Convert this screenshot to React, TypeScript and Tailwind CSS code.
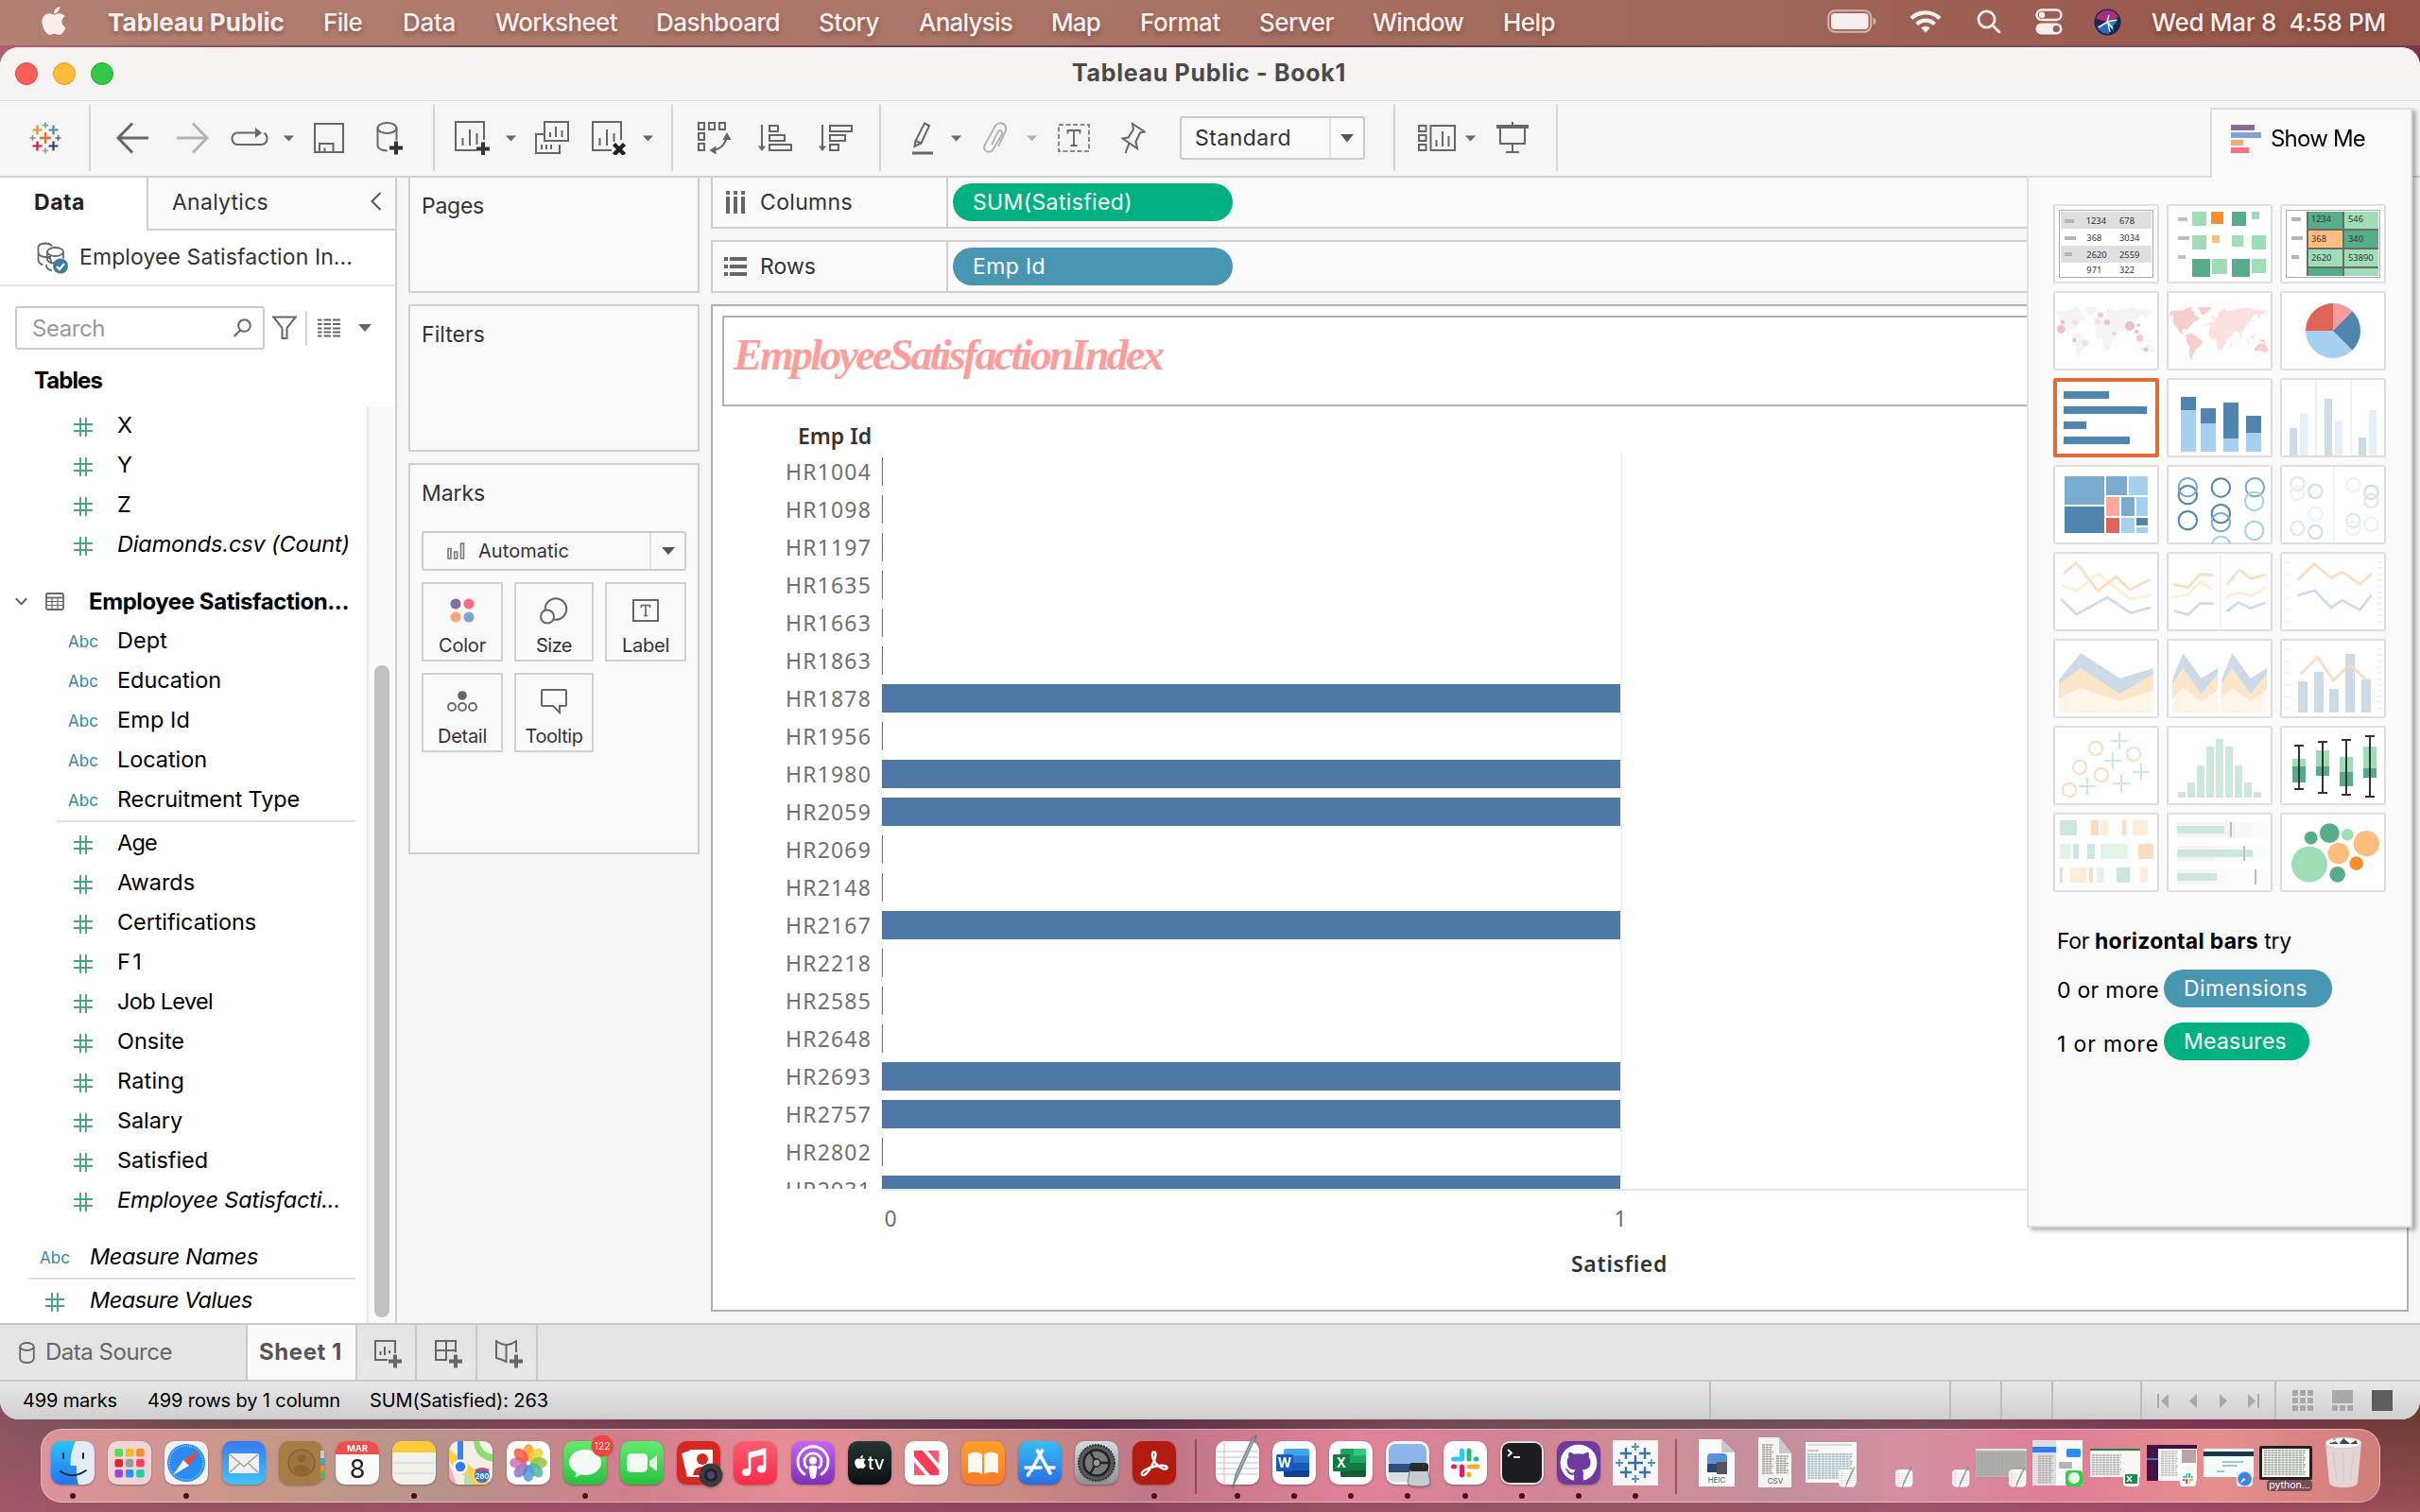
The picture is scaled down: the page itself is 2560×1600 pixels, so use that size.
import { useLayoutEffect, useRef, useState } from "react";
import type { ReactNode } from "react";
import { FaApple, FaGithub } from "react-icons/fa";

/* Text whose letter spacing is adjusted so that the line takes a given width. */
function T({ w, className = "", children }: { w: number; className?: string; children: string }) {
  const ref = useRef<HTMLSpanElement>(null);
  const [ls, setLs] = useState(0);
  useLayoutEffect(() => {
    const el = ref.current;
    if (el) setLs((w - el.getBoundingClientRect().width) / children.length);
  }, [w, children]);
  return (
    <span ref={ref} style={{ letterSpacing: ls }} className={"inline-block shrink-0 self-auto whitespace-pre " + className}>
      {children}
    </span>
  );
}

/* ---------- menu bar ---------- */
const menus: [string, number, string][] = [
  ["File", 41, "ml-[41px]"],
  ["Data", 56, "ml-[43px]"],
  ["Worksheet", 129, "ml-[42px]"],
  ["Dashboard", 131, "ml-[41px]"],
  ["Story", 64, "ml-[41px]"],
  ["Analysis", 99, "ml-[42px]"],
  ["Map", 52, "ml-[41px]"],
  ["Format", 85, "ml-[42px]"],
  ["Server", 79, "ml-[41px]"],
  ["Window", 96, "ml-[41px]"],
  ["Help", 55, "ml-[42px]"],
];

function MenuBar() {
  return (
    <header className="flex h-12 items-center bg-linear-to-r from-[#b28072] via-[#a87265] to-[#945548] pb-[2px] font-['Inter'] text-[26px] font-medium text-[#f8eeeb] [text-shadow:0_3px_5px_rgba(60,20,10,0.35)]">
      <FaApple className="ml-10 h-[34px] w-[34px] -translate-y-px" />
      <T w={187} className="ml-10 font-bold">Tableau Public</T>
      {menus.map(([m, w, c]) => (
        <T key={m} w={w} className={c}>{m}</T>
      ))}
      <div className="ml-auto mr-[36px] flex items-center">
        <svg width="52" height="26" viewBox="0 0 52 26" fill="none">
          <rect x="1.2" y="1.2" width="45" height="22.6" rx="7" stroke="#d5b6ae" strokeWidth="2" />
          <rect x="4" y="4" width="39.5" height="17" rx="4" fill="#f5eeec" />
          <path d="M48.5 8.5q3 1.5 3 4t-3 4z" fill="#d5b6ae" />
        </svg>
        <svg className="ml-[35px]" width="34" height="26" viewBox="0 0 34 26" fill="none" stroke="#f5eeec" strokeWidth="4.4">
          <path d="M2 9.5a21.5 21.5 0 0 1 30 0" />
          <path d="M7.6 15.5a13.4 13.4 0 0 1 18.8 0" />
          <path d="M17 24.5l-4.8-4.9a7 7 0 0 1 9.6 0z" fill="#f5eeec" stroke="none" />
        </svg>
        <svg className="ml-[37px]" width="26" height="26" viewBox="0 0 26 26" fill="none" stroke="#f5eeec" strokeWidth="2.8" strokeLinecap="round">
          <circle cx="10.5" cy="10.5" r="8.6" />
          <path d="M17 17l7 7" />
        </svg>
        <svg className="ml-9" width="30" height="28" viewBox="0 0 30 28" fill="none">
          <rect x="1.5" y="1.5" width="26" height="10.5" rx="5.2" stroke="#f5eeec" strokeWidth="2.4" />
          <circle cx="7" cy="6.7" r="3.2" fill="#f5eeec" />
          <rect x="0.5" y="15.5" width="28" height="12" rx="6" fill="#f5eeec" />
          <circle cx="22.3" cy="21.5" r="3.6" fill="#9a5d50" />
        </svg>
        <svg className="ml-[32px]" width="29" height="29" viewBox="0 0 29 29">
          <circle cx="14.5" cy="14.5" r="14" fill="#232152" />
          <path d="M2 11A13 13 0 0 1 26 9L14 14z" fill="#a8307c" />
          <path d="M3 19l11-5 2 13a13 13 0 0 1-13-8z" fill="#1f6fc0" />
          <path d="M13 14l13-3-6 8 1 6z" fill="#1f8f9e" />
          <path d="M5 20l9.500-6 2.500 11M14 14l10-2M14 14l6 7M14 14l2-7" stroke="#eaf6ff" strokeWidth="1.500" fill="none" />
        </svg>
        <T w={248} className="ml-8">Wed Mar 8  4:58 PM</T>
      </div>
    </header>
  );
}

/* ---------- toolbar ---------- */
function Caret({ c, light }: { c: string; light?: boolean }) {
  return (
    <svg className={"shrink-0 " + c} width="11" height="7" viewBox="0 0 11 7">
      <path d="M0 .5h11L5.5 6.5z" fill={light ? "#b4b4b4" : "#666"} />
    </svg>
  );
}

function Ico({ c = "", w, h, children, s = "#666", sw = 2 }: { c?: string; w: number; h: number; children: ReactNode; s?: string; sw?: number }) {
  return (
    <svg className={"shrink-0 " + c} width={w} height={h} viewBox={`0 0 ${w} ${h}`} fill="none" stroke={s} strokeWidth={sw}>
      {children}
    </svg>
  );
}

const plus = (x: number, y: number, r: number) => `M${x - r} ${y}h${2 * r}M${x} ${y - r}v${2 * r}`;

function Toolbar() {
  return (
    <div className="flex h-[80px] items-stretch border-t border-[#dedede] bg-[#f5f5f5] pb-[5px] pt-[4px]">
      <div className="flex w-24 items-center border-r-2 border-[#d4d4d4]">
        <Ico c="ml-[31px]" w={34} h={34}>
          <path d={plus(17, 17, 6)} stroke="#eb6e2d" strokeWidth={2.4} />
          <path d={plus(8.5, 8.5, 5)} stroke="#eb9129" strokeWidth={2.2} />
          <path d={plus(25.5, 8.5, 5)} stroke="#5b879b" strokeWidth={2.2} />
          <path d={plus(8.5, 25.5, 5)} stroke="#c72035" strokeWidth={2.2} />
          <path d={plus(25.5, 25.5, 5)} stroke="#1f447e" strokeWidth={2.2} />
          <path d={plus(17, 3.5, 3)} stroke="#7099a6" strokeWidth={1.6} />
          <path d={plus(3.5, 17, 3)} stroke="#7099a6" strokeWidth={1.6} />
          <path d={plus(30.5, 17, 3)} stroke="#5c6692" strokeWidth={1.6} />
          <path d={plus(17, 30.5, 3)} stroke="#8b93b8" strokeWidth={1.6} />
        </Ico>
      </div>
      <div className="flex w-[364px] items-center border-r-2 border-[#d4d4d4]">
        <Ico c="ml-[27px]" w={34} h={34} sw={3}><path d="M34 17H2M17 1.5L2 17l15 15.5" /></Ico>
        <Ico c="ml-[30px]" w={34} h={34} sw={3} s="#b4b4b4"><path d="M0 17h32M17 1.5L32 17 17 32.5" /></Ico>
        <Ico c="ml-[23px]" w={40} h={34}>
          <path d="M30 11.5H8a6 6 0 0 0-6.5 6.5A6 6 0 0 0 8 24h24a6 6 0 0 0 6.500-6.500q0-4-3-5.500" />
          <path d="M26 6l7 5.500-7 5.500z" fill="#666" stroke="none" />
        </Ico>
        <Caret c="ml-[16px]" />
        <Ico c="ml-[21px]" w={32} h={34}><path d="M1 2h30v30H1zM6 32V23h14.500v9M11.500 32v-4.500" /></Ico>
        <Ico c="ml-[34px]" w={30} h={36}>
          <ellipse cx="11.500" cy="7.500" rx="10" ry="5.500" />
          <path d="M1.500 7.500v19q1 4.500 10 5M21.500 7.500v13" />
          <path d="M14 28.500h14M21 21.500v14" stroke="#333" strokeWidth={4} />
        </Ico>
      </div>
      <div className="flex w-[252px] items-center border-r-2 border-[#d4d4d4]">
        <Ico c="ml-[21px]" w={38} h={36}>
          <path d="M31 20V1H1v30h22M8.500 26v-8M16 26V9M23.500 13v12" />
          <path d="M23 29.500h14M30 22.500v14" stroke="#333" strokeWidth={4} />
        </Ico>
        <Caret c="ml-[16px]" />
        <Ico c="ml-[20px]" w={36} h={36}>
          <path d="M10 1h25v20H10zM16 17v-5M22 17V6M28.500 17v-7M10 14H1v20h25v-9M7 30v-5M12 30v-5M17 30v-5" />
        </Ico>
        <Ico c="ml-[24px]" w={38} h={36}>
          <path d="M31 20V1H1v30h20M8.500 26v-8M16 26V9M23.500 22v-9" />
          <path d="M23.500 24.500l11 11M34.500 24.500l-11 11" stroke="#222" strokeWidth={4.4} />
        </Ico>
        <Caret c="ml-[16px]" />
      </div>
      <div className="flex w-[220px] items-center border-r-2 border-[#d4d4d4]">
        <Ico c="ml-[26px]" w={36} h={36}>
          <path d="M1 2h6v7H1zM12 2h6v7h-6zM23 2h6v7h-6zM1 13h6v7H1zM1 24h6v7H1zM17 31q12-3 13.500-14" />
          <path d="M12.500 31l7-4.500v9zM31 12l-4.500 8h9z" fill="#666" stroke="none" />
        </Ico>
        <Ico c="ml-[28px]" w={36} h={32}>
          <path d="M4 2v24M12 3h9v6h-9zM12 13h16v6H12zM12 23h23v6H12z" />
          <path d="M0 24.500h8l-4 5.500z" fill="#666" stroke="none" />
        </Ico>
        <Ico c="ml-[28px]" w={36} h={32}>
          <path d="M4 2v24M12 3h23v6H12zM12 13h16v6H12zM12 23h9v6h-9z" />
          <path d="M0 24.500h8l-4 5.500z" fill="#666" stroke="none" />
        </Ico>
      </div>
      <div className="flex w-[544px] items-center border-r-2 border-[#d4d4d4]">
        <Ico c="ml-[33px]" w={22} h={36}>
          <path d="M13 2.500l5 2.500-8.500 18.500-6-2.500zM3.500 21l-1 6 6.500-3.500" />
          <path d="M0 34h22" strokeWidth={3.2} />
        </Ico>
        <Caret c="ml-[19px]" />
        <Ico c="ml-[23px]" w={26} h={34} s="#b4b4b4">
          <path d="M9 24l7-14q2-2 3.500 0t0 4L10 30q-3 3-6.500 1T1.500 25L13 4q4-4 8-2t3 7l-8 17" />
        </Ico>
        <Caret c="ml-[20px]" light />
        <Ico c="ml-[22px]" w={34} h={30}>
          <rect x="1" y="1" width="32" height="28" strokeDasharray="5 2.500" stroke="#8a8a8a" />
          <path d="M10.500 10.500V7h13v3.500M17 7v16M13.500 23h7" strokeWidth={1.800} />
        </Ico>
        <Ico c="ml-[33px]" w={26} h={34}>
          <path d="M12 2l13 8.500-5 1-4.500 9.500 1.500 7L1.500 17.500l6-1L13 8zM8.500 22.500L4.500 33" />
        </Ico>
        <div className="ml-[36px] flex h-[46px] w-[196px] shrink-0 items-center rounded-[3px] border-2 border-[#cbcbcb] bg-[#fafafa]">
          <T w={102} className="ml-[14px] text-[23px] text-[#333]">Standard</T>
          <span className="ml-auto flex h-full w-[36px] items-center justify-center border-l-2 border-[#e3e3e3]">
            <svg width="14" height="9" viewBox="0 0 14 9"><path d="M0 0h14L7 8.500z" fill="#555" /></svg>
          </span>
        </div>
      </div>
      <div className="flex w-[172px] items-center border-r-2 border-[#d4d4d4]">
        <Ico c="ml-[24px]" w={40} h={30}>
          <path d="M1 2h7.500v6H1zM1 12h7.500v6H1zM1 22h7.500v6H1zM13.500 2H39v26H13.500zM19.500 24v-7M26 24V8M32.500 24V13" />
        </Ico>
        <Caret c="ml-[10px]" />
        <Ico c="ml-[22px]" w={34} h={34}>
          <path d="M4 7v16h26V7M17 0v3M17 23v9M10 32h14" />
          <path d="M0 5h34" strokeWidth={4} />
        </Ico>
      </div>
    </div>
  );
}

/* ---------- data pane ---------- */
function Hash() {
  return (
    <svg width="20" height="20" viewBox="0 0 20 20" stroke="#46a57c" strokeWidth="1.900" fill="none">
      <path d="M0 7h20M0 14h20M7 0v20M13 0v20" />
    </svg>
  );
}

type FieldDef = { name: string; w: number; abc?: boolean; it?: boolean; top?: boolean };

function Field({ name, w, abc, it, top }: FieldDef) {
  return (
    <div className={"flex h-[42px] items-center " + (top ? "pl-[38px]" : "pl-[68px]")}>
      <span className="mt-[5px] flex w-10 justify-center">
        {abc ? <T w={32} className="font-['Inter'] text-[17px] text-[#3d82a3]">Abc</T> : <Hash />}
      </span>
      <T w={w} className={"mt-px text-[23.500px] text-black " + (top ? "ml-[17px] " : "ml-[16px] ") + (it ? "italic" : "")}>{name}</T>
    </div>
  );
}

const diamonds: FieldDef[] = [
  { name: "X", w: 15 },
  { name: "Y", w: 14 },
  { name: "Z", w: 14 },
  { name: "Diamonds.csv (Count)", w: 246, it: true },
];
const dims: FieldDef[] = [
  { name: "Dept", w: 53, abc: true },
  { name: "Education", w: 110, abc: true },
  { name: "Emp Id", w: 77, abc: true },
  { name: "Location", w: 95, abc: true },
  { name: "Recruitment Type", w: 193, abc: true },
];
const measures: FieldDef[] = [
  { name: "Age", w: 42 },
  { name: "Awards", w: 82 },
  { name: "Certifications", w: 147 },
  { name: "F1", w: 28 },
  { name: "Job Level", w: 101 },
  { name: "Onsite", w: 71 },
  { name: "Rating", w: 71 },
  { name: "Salary", w: 69 },
  { name: "Satisfied", w: 96 },
  { name: "Employee Satisfacti...", w: 236, it: true },
];

function DataPane() {
  return (
    <aside className="flex w-[420px] shrink-0 flex-col border-r-2 border-[#d0d0d0] bg-white">
      <div className="flex h-14 shrink-0">
        <div className="w-[155px] pl-[36px] pt-[9px]">
          <T w={54} className="text-[23px] font-bold text-[#222]">Data</T>
        </div>
        <div className="flex flex-1 border-b-2 border-l-2 border-[#d0d0d0] bg-[#fafafa] pt-[9px]">
          <T w={102} className="ml-[25px] text-[23px] text-[#333]">Analytics</T>
          <svg className="ml-auto mr-[14px] mt-[6px]" width="12" height="20" viewBox="0 0 12 20" fill="none" stroke="#555" strokeWidth="2">
            <path d="M10.500 1L1.500 10l9 9" />
          </svg>
        </div>
      </div>
      <div className="flex h-[59px] shrink-0 items-center border-b-2 border-[#e6e6e6]">
        <svg className="ml-[39px]" width="34" height="34" viewBox="0 0 34 34" fill="none" stroke="#666" strokeWidth="1.800">
          <path d="M16 4.500Q14 1.500 9 1.500 1.500 2 1.500 5.500v14q1 4 5 4.500M2 12q1 4 8 4l5 0M15 21q0-5-5-5M10 24q0 6 6 6" />
          <ellipse cx="19.500" cy="10.500" rx="8.500" ry="4.500" />
          <path d="M11 10.500v8q1 4 8 4M28 10.500v7" />
          <circle cx="25" cy="25.500" r="8" fill="#3a7d9f" stroke="none" />
          <path d="M21 26l3 3 5-6" stroke="#fff" strokeWidth="2.200" />
        </svg>
        <T w={289} className="ml-[11px] text-[23px] text-[#333]">Employee Satisfaction In...</T>
      </div>
      <div className="mt-[21px] flex h-[46px] shrink-0 items-center">
        <div className="ml-4 flex h-[46px] w-[264px] items-center rounded-[3px] border-2 border-[#cbcbcb]">
          <T w={77} className="ml-[16px] mt-px text-[24px] text-[#999]">Search</T>
          <svg className="ml-auto mr-[12px]" width="19" height="20" viewBox="0 0 19 20" fill="none" stroke="#666" strokeWidth="2">
            <circle cx="11.500" cy="7.500" r="6.300" /><path d="M7 12.500L.8 19" />
          </svg>
        </div>
        <svg className="ml-2" width="26" height="26" viewBox="0 0 26 26" fill="none" stroke="#666" strokeWidth="2">
          <path d="M1.200 1.500h23.600L15.500 13v11h-5V13z" />
        </svg>
        <div className="ml-[9px] h-9 w-[2px] bg-[#d4d4d4]" />
        <svg className="ml-[11px]" width="24" height="20" viewBox="0 0 24 20" stroke="#666" strokeWidth="2">
          <path d="M0 1.500h4.500M6.500 1.500h7.500M16 1.500h8M0 6h4.500M6.500 6h7.500M16 6h8M0 10.500h4.500M6.500 10.500h7.500M16 10.500h8M0 14.500h4.500M6.500 14.500h7.500M16 14.500h8M0 18.500h4.500M6.500 18.500h7.500M16 18.500h8" />
        </svg>
        <svg className="ml-[19px]" width="14" height="8" viewBox="0 0 14 8"><path d="M0 0h14L7 8z" fill="#666" /></svg>
      </div>
      <div className="flex h-[58px] shrink-0 items-center pt-[8px]">
        <T w={72} className="ml-[36px] text-[24px] font-bold text-black">Tables</T>
      </div>
      <div className="flex min-h-0 flex-1">
        <div className="w-[388px]">
          {diamonds.map((f) => <Field key={f.name} {...f} />)}
          <div className="mt-5 flex h-10 items-center">
            <svg className="ml-4" width="13" height="9" viewBox="0 0 13 9" fill="none" stroke="#666" strokeWidth="2"><path d="M.8 1.200l5.700 6 5.700-6" /></svg>
            <svg className="ml-[19px]" width="20" height="19" viewBox="0 0 20 19" fill="none" stroke="#666" strokeWidth="1.800">
              <rect x="1" y="1" width="18" height="17" rx="1.500" />
              <path d="M1 5.500h18" /><path d="M1 9.500h18M1 13.500h18M7 5.500V18M13 5.500V18" strokeWidth="1.200" />
            </svg>
            <T w={275} className="ml-[26px] mt-[2px] text-[24px] font-bold text-black">Employee Satisfaction...</T>
          </div>
          {dims.map((f) => <Field key={f.name} {...f} />)}
          <div className="ml-[60px] mt-[2px] h-[2px] w-[316px] bg-[#dedede]" />
          {measures.map((f) => <Field key={f.name} {...f} />)}
          <div className="h-[18px]" />
          <Field name="Measure Names" w={178} abc it top />
          <div className="ml-[30px] mt-[2px] h-[2px] w-[346px] bg-[#dedede]" />
          <Field name="Measure Values" w={172} it top />
        </div>
        <div className="mt-[2px] flex w-[30px] justify-center border-l-2 border-[#e8e8e8] bg-[#f9f9f9]">
          <div className="mt-[274px] h-[690px] w-4 rounded-full bg-[#c1c1c1]" />
        </div>
      </div>
    </aside>
  );
}

/* ---------- cards ---------- */
function MarkButton({ label, w, children }: { label: string; w: number; children: ReactNode }) {
  return (
    <div className="flex h-[84px] flex-col items-center justify-between border-2 border-[#d0d0d0] pt-3">
      <div className="flex h-8 items-center justify-center">{children}</div>
      <T w={w} className="text-[20px] leading-[30px] text-[#333]">{label}</T>
    </div>
  );
}

function Cards() {
  const box = "w-[308px] border-2 border-[#d0d0d0] bg-[#fafafa]";
  return (
    <div className="ml-3 flex w-[308px] shrink-0 flex-col">
      <div className={box + " h-[122px] border-t-0 pl-3 pt-[14px]"}>
        <T w={66} className="text-[23px] leading-[32px] text-[#333]">Pages</T>
      </div>
      <div className={box + " mt-3 h-[156px] pl-3 pt-[14px]"}>
        <T w={67} className="text-[23px] leading-[32px] text-[#333]">Filters</T>
      </div>
      <div className={box + " mt-3 h-[414px] px-3 pt-[14px]"}>
        <T w={67} className="text-[23px] leading-[32px] text-[#333]">Marks</T>
        <div className="mt-6 flex h-[42px] items-center rounded-[3px] border-2 border-[#cbcbcb]">
          <svg className="ml-[25px]" width="19" height="18" viewBox="0 0 19 18" fill="none" stroke="#777" strokeWidth="1.600">
            <path d="M1 6.500h3v10.500H1zM7.700 10h3v7h-3zM14.500 1h3v16h-3z" />
          </svg>
          <T w={96} className="ml-[14px] text-[20px] text-[#333]">Automatic</T>
          <span className="ml-auto flex h-full w-[37px] items-center justify-center border-l-2 border-[#e3e3e3]">
            <svg width="14" height="8" viewBox="0 0 14 8"><path d="M0 0h14L7 8z" fill="#555" /></svg>
          </span>
        </div>
        <div className="mt-3 grid grid-cols-[86px_84px_86px] gap-3">
          <MarkButton label="Color" w={50}>
            <svg width="26" height="26" viewBox="0 0 26 26">
              <circle cx="6" cy="6" r="5.600" fill="#84709a" /><circle cx="20" cy="6" r="5.600" fill="#fa7080" />
              <circle cx="6" cy="20" r="5.600" fill="#f4a67c" /><circle cx="20" cy="20" r="5.600" fill="#80a4cb" />
            </svg>
          </MarkButton>
          <MarkButton label="Size" w={38}>
            <svg width="30" height="29" viewBox="0 0 30 29" fill="none" stroke="#666" strokeWidth="2">
              <circle cx="17" cy="12.500" r="11.300" /><circle cx="8" cy="20.500" r="7" fill="#fafafa" />
            </svg>
          </MarkButton>
          <MarkButton label="Label" w={50}>
            <svg width="28" height="24" viewBox="0 0 28 24" fill="none" stroke="#666" strokeWidth="2">
              <rect x="1" y="1" width="26" height="22" /><path d="M9.500 9V6.500h9V9M14 6.500v11M12 17.500h4" strokeWidth="1.600" />
            </svg>
          </MarkButton>
          <MarkButton label="Detail" w={52}>
            <svg width="32" height="24" viewBox="0 0 32 24" fill="none" stroke="#666" strokeWidth="1.800">
              <circle cx="16" cy="6" r="4.800" fill="#666" stroke="none" />
              <circle cx="5" cy="18" r="4" /><circle cx="16" cy="18" r="4" /><circle cx="27" cy="18" r="4" />
            </svg>
          </MarkButton>
          <MarkButton label="Tooltip" w={61}>
            <svg width="28" height="27" viewBox="0 0 28 27" fill="none" stroke="#666" strokeWidth="2">
              <path d="M2 1h24q1 0 1 1v15q0 1-1 1h-6v7l-7-7H2q-1 0-1-1V2q0-1 1-1z" />
            </svg>
          </MarkButton>
        </div>
      </div>
    </div>
  );
}

/* ---------- worksheet ---------- */
const rows: [string, number][] = [
  ["HR1004", 0], ["HR1098", 0], ["HR1197", 0], ["HR1635", 0], ["HR1663", 0], ["HR1863", 0], ["HR1878", 1],
  ["HR1956", 0], ["HR1980", 1], ["HR2059", 1], ["HR2069", 0], ["HR2148", 0], ["HR2167", 1], ["HR2218", 0],
  ["HR2585", 0], ["HR2648", 0], ["HR2693", 1], ["HR2757", 1], ["HR2802", 0], ["HR2931", 1],
];

function Shelves() {
  return (
    <>
      <div className="flex h-[54px] shrink-0 items-center border-2 border-t-0 border-[#d0d0d0] bg-[#fafafa]">
        <div className="flex h-full w-[249px] items-center border-r-2 border-[#d0d0d0]">
          <svg className="ml-[14px]" width="20" height="24" viewBox="0 0 20 24" fill="#666">
            <path d="M0 0h4v4H0zM8 0h4v4H8zM16 0h4v4h-4zM0 6h4v18H0zM8 6h4v18H8zM16 6h4v18h-4z" />
          </svg>
          <T w={98} className="ml-[16px] text-[23px] text-[#333]">Columns</T>
        </div>
        <div className="ml-[5px] flex h-10 w-[296px] items-center rounded-[20px] bg-[#00b180]">
          <T w={169} className="ml-[21px] text-[23px] text-white">SUM(Satisfied)</T>
        </div>
      </div>
      <div className="mt-3 flex h-14 shrink-0 items-center border-2 border-[#d0d0d0] bg-[#fafafa]">
        <div className="flex h-full w-[249px] items-center border-r-2 border-[#d0d0d0]">
          <svg className="ml-[12px]" width="24" height="20" viewBox="0 0 24 20" fill="#666">
            <path d="M0 0h4v4H0zM6 0h18v4H6zM0 8h4v4H0zM6 8h18v4H6zM0 16h4v4H0zM6 16h18v4H6z" />
          </svg>
          <T w={59} className="ml-[14px] mt-px text-[23px] text-[#333]">Rows</T>
        </div>
        <div className="ml-[5px] flex h-10 w-[296px] items-center rounded-[20px] bg-[#4996b2]">
          <T w={77} className="ml-[21px] text-[23px] text-white">Emp Id</T>
        </div>
      </div>
    </>
  );
}

function Worksheet() {
  return (
    <main className="ml-3 flex w-[1796px] shrink-0 flex-col">
      <Shelves />
      <section className="mt-3 flex h-[1066px] flex-col border-2 border-[#b0b0b0] bg-white pl-[10px] pt-[10px]">
        <div className="h-24 shrink-0 border-2 border-r-0 border-[#b0b0b0] pl-[10px] pt-[10px]">
          <T w={453} className="font-['Liberation_Serif'] text-[46px] font-bold italic leading-[60px] text-[#ff9d9a]">EmployeeSatisfactionIndex</T>
        </div>
        <div className="flex h-12 shrink-0 items-end pl-[80px] font-['Noto_Sans']">
          <T w={78} className="text-[23px] font-semibold leading-[34px] text-[#333]">Emp Id</T>
        </div>
        <div className="flex h-[780px] shrink-0 overflow-hidden">
          <div className="w-[159px] shrink-0 font-['Noto_Sans']">
            {rows.map(([id]) => (
              <div key={id} className="h-10 pl-[67px]">
                <T w={91} className="text-[23px] leading-[43px] text-[#707070]">{id}</T>
              </div>
            ))}
          </div>
          <div className="ml-[9px] w-[784px] shrink-0 border-r-2 border-[#f0f0f0]">
            {rows.map(([id, v]) => (
              <div key={id} className="flex h-10 items-start border-l border-[#ededed] pt-[6px]">
                <div className={"h-[30px] bg-[#4e79a7] " + (v ? "w-full" : "w-px")} />
              </div>
            ))}
          </div>
        </div>
        <div className="ml-[168px] flex border-t-2 border-[#e6e6e6] pt-[12px] font-['Noto_Sans'] text-[23px] leading-[34px] text-[#707070]">
          <span className="w-5 text-center">0</span>
          <span className="ml-[752px] w-5 text-center">1</span>
        </div>
        <div className="ml-[898px] mt-[14px] font-['Noto_Sans']">
          <T w={102} className="text-[23px] font-semibold leading-[34px] text-[#333]">Satisfied</T>
        </div>
      </section>
    </main>
  );
}

/* ---------- Show Me ---------- */
const G = "#57ad89", LG = "#9fddb7", PG = "#cde7dc", O = "#f58e2c", LO = "#ffbd7e", B = "#5085ae", MB = "#7baacf", LB = "#a5d0f0", PB = "#cddbe9", PO = "#fbdcc0";

const R = (fill: string, list: number[][]) => (
  <g fill={fill}>
    {list.map(([x, y, w, h]) => <rect key={`${x}-${y}`} x={x} y={y} width={w} height={h} />)}
  </g>
);
const C = (stroke: string, r: number, list: number[][], sw = 6) => (
  <g fill="none" stroke={stroke} strokeWidth={sw}>
    {list.map(([x, y]) => <circle key={`${x}-${y}`} cx={x} cy={y} r={r} />)}
  </g>
);
const D = (fill: string, list: number[][]) => (
  <g fill={fill}>
    {list.map(([x, y, r]) => <circle key={`${x}-${y}`} cx={x} cy={y} r={r} />)}
  </g>
);
const L = (stroke: string, d: string, sw = 8) => <path d={d} fill="none" stroke={stroke} strokeWidth={sw} strokeLinecap="round" />;
const N = (x: number, y: number, s: string) => (
  <text key={s} x={x} y={y} fontSize="28" fill="#333" fontFamily="Noto Sans">{s}</text>
);

const americas =
  "M12 66l10-5 18 1 14-2 8-6 12 2 8 8 10 14 12 8-4 6-12 4-6 8-6 6-6 8-2 6-6-4-10 2-2 8 4 8 10 0 6 8-8-4-12-4-10-8-8-16-6-4-6-12 2-14-6-8-8 2z" +
  "M58 58l14-6 12 0-6 8 14 8-8 2-14-8zM96 52l48-2-8 10-18 16-8-2-4-12z" +
  "M62 138l18-4 12 8 18 14 2 8-8 14-10 6-6 12-6 8 0 10 4 4-10-4-4-20 0-20-10-14z";
const oldWorld =
  "M150 96l4-10 8-4 2-14 12-12 10 2 6 6 22-4 16-4 20-4 24 6 30 2 12 2-2 8-14 4-2 12-8-2 0-10-14 2-6 8-4 10-10 4 0 12-6 0-2 10-8 8-6 4 6 12-4 6-4-14-4-6-8-4-8 6-6 14-6-4-6-16-8-2-6-4-8 2 8 8-8 8-10 2-10-18-2-8-8-2-6-4-8-2-6 4-8-2z" +
  "M136 118l10-12 16 0 22 6 6 14 6 8 8 0-6 12-8 8 0 12-8 6-4 14-8 4-6 0-6-16 2-14-4-10-14 2-8-8zM142 84l6-8 4 10-4 6zM202 168l5-6-2 16-6 2z" +
  "M252 146l10 14 8 4-6 2-12-12zM268 142l10-4-2 14-10-2zM278 128l5 8-3 4zM270 96l8-6 2-8-4 14z";
const oceania = "M278 182l12-12 10-4 6 4 4-8 6 12 6 14-6 8-12-4-10-4-14 4zM296 152l14 4 8 8-10-2-12-4z";
const ticks = (list: number[], x: number) => R("#f0f0f0", list.map((y) => [x, y, 18, 5]));
const leftT = [30, 69, 105, 144, 180, 219];
const rightT = [30, 48, 69, 87, 105, 126, 144, 162, 180, 198, 219];

const thumbs: ReactNode[] = [
  <>
    <rect x="19.500" y="19.500" width="297" height="213" fill="#fff" stroke="#ababab" strokeWidth="3" />
    {R("#dfdfdf", [[24, 24, 288, 54], [24, 132, 288, 54]])}
    {R("#b4b4b4", [[36, 48, 30, 12], [36, 102, 36, 12], [36, 153, 24, 12]])}
    {N(104, 62, "1234")}{N(210, 62, "678")}{N(106, 116, "368")}{N(210, 116, "3034")}{N(106, 170, "2620")}{N(210, 170, "2559")}{N(106, 218, "971")}{N(210, 218, "322")}
  </>,
  <>
    {R("#c0c0c0", [[36, 42, 30, 12], [36, 102, 36, 12], [36, 162, 24, 12]])}
    {R(LG, [[81, 24, 45, 45], [270, 24, 24, 24], [81, 99, 45, 45], [207, 99, 36, 36], [270, 99, 45, 45], [144, 174, 48, 48], [270, 174, 45, 45]])}
    {R(G, [[207, 24, 45, 45], [81, 174, 57, 57], [207, 174, 57, 57]])}
    {R(O, [[141, 24, 39, 39]])}{R(LO, [[144, 99, 24, 24]])}
  </>,
  <>
    <rect x="19.500" y="19.500" width="297" height="213" fill="#fff" stroke="#ababab" strokeWidth="3" />
    {R("#b4b4b4", [[36, 42, 30, 12], [36, 102, 36, 12], [36, 162, 24, 12]])}
    {R("#6a6a6a", [[84, 24, 228, 204]])}
    {R(G, [[90, 24, 108, 54], [204, 84, 108, 54], [90, 204, 108, 24]])}
    {R(LG, [[204, 24, 108, 54], [90, 144, 108, 54], [204, 144, 108, 54], [204, 204, 108, 24]])}
    {R(LO, [[90, 84, 108, 54]])}
    {N(98, 58, "1234")}{N(216, 58, "546")}{N(99, 121, "368")}{N(216, 121, "340")}{N(99, 181, "2620")}{N(216, 181, "53890")}
  </>,
  <>
    <path d={americas + oldWorld + oceania} fill="#f4f4f4" />
    {D("#ebbfc5", [[25, 121, 13], [30, 99, 7], [171, 100, 9], [243, 111, 15], [265, 129, 7], [67, 156, 7], [294, 186, 7]])}
    {D("#f6cbcb", [[150, 76, 9], [193, 135, 6], [271, 108, 6], [275, 149, 11]])}
    {D("#ffdcdc", [[69, 100, 9], [141, 96, 9], [102, 165, 10]])}
  </>,
  <>
    <path d={americas + oceania} fill="#f6cfcd" />
    <path d={oldWorld} fill="#ffe0e0" />
  </>,
  <>
    <circle cx="168" cy="126" r="87" fill={LB} />
    <path d="M168 126H81a87 87 0 0 1 87-87z" fill="#e06358" />
    <path d="M168 126V39a87 87 0 0 1 61.500 25.500z" fill="#ff9d9a" />
    <path d="M168 126l61.500-61.500a87 87 0 0 1 0 123z" fill={B} />
  </>,
  <>{R(B, [[33, 42, 144, 24], [33, 90, 264, 24], [33, 138, 72, 24], [33, 186, 210, 24]])}</>,
  <>
    {R(B, [[45, 60, 48, 42], [108, 96, 48, 48], [180, 78, 48, 114], [252, 120, 48, 54]])}
    {R(LB, [[45, 102, 48, 132], [108, 144, 48, 90], [180, 192, 48, 42], [252, 174, 48, 60]])}
  </>,
  <>
    {R("#f0f0f0", [[111, 6, 6, 240], [222, 6, 6, 240]])}
    {R(PB, [[30, 159, 24, 87], [141, 66, 24, 180], [249, 189, 24, 57]])}
    {R("#e4f1fb", [[63, 111, 24, 135], [174, 135, 24, 111], [282, 102, 24, 144]])}
  </>,
  <>
    {R(MB, [[36, 36, 126, 90], [168, 36, 66, 60], [216, 102, 42, 60]])}
    {R(B, [[36, 132, 126, 84], [264, 168, 36, 24]])}
    {R(LB, [[240, 36, 60, 60], [264, 102, 36, 60], [216, 168, 42, 48], [264, 198, 36, 18]])}
    {R("#ffa6a0", [[168, 102, 42, 60]])}{R("#e06358", [[168, 168, 42, 48]])}
  </>,
  <>
    {C(B, 29, [[67, 95], [67, 176], [172, 72], [172, 155]])}
    {C(MB, 29, [[67, 71], [172, 182], [280, 71]])}
    {C(LB, 29, [[278, 115], [278, 208], [173, 256]])}
  </>,
  <>
    {R("#f0f0f0", [[168, 6, 5, 240]])}
    {C(PB, 21.500, [[112, 84], [112, 213], [289, 87]])}
    {C("#dbe7f2", 21.500, [[55, 60], [55, 201], [289, 114], [232, 177]])}
    {C("#e6f2fc", 21.500, [[55, 90], [232, 63], [112, 156], [289, 189], [232, 201]])}
  </>,
  <>
    {L("#fdefd2", "M30 107l44 17 68-54 104 81 60-13")}
    {L(PO, "M36 67l37-33 69 90 58-46 43 42 63-32")}
    {L(PB, "M28 153l45 45 99-53 74 49 60-17")}
  </>,
  <>
    {R("#f0f0f0", [[168, 6, 5, 240]])}
    {L("#fdefd2", "M25 144l43-8 38-42 36 24M188 144l40-15 40 12 43-26")}
    {L(PO, "M25 104l43 9 38-42 40 3M192 102l38-45 37 28 43-11")}
    {L(PB, "M26 188l42 11 38-35h40M193 187l35-26 38 18 44-16")}
  </>,
  <>
    {ticks(leftT, 15)}{ticks(rightT, 306)}
    {L(PO, "M59 86l50-48 52 45 36-20 56 39 35-31")}
    {L(PB, "M58 138l51-16 52 55 36-23 56 30 35-45")}
  </>,
  <>
    <path d="M18 130L87 45l125 80 106-32v140H18z" fill={PB} />
    <path d="M18 143l69-50 125 82 106-64v122H18z" fill="#fde5ca" />
    <path d="M18 188l69-32 125 42 106-35v70H18z" fill="#fff5e8" />
  </>,
  <>
    {[0, 156].map((x) => (
      <g key={x} transform={`translate(${x})`}>
        <path d="M18 130L52 45l58 80 52-32v140H18z" fill={PB} />
        <path d="M18 143l34-50 58 82 52-64v122H18z" fill="#fde5ca" />
        <path d="M18 188l34-32 58 42 52-35v70H18z" fill="#fff5e8" />
      </g>
    ))}
  </>,
  <>
    {ticks(leftT, 15)}{ticks(rightT, 306)}
    {R(PB, [[57, 135, 30, 99], [108, 105, 30, 129], [156, 159, 30, 75], [207, 48, 30, 186], [258, 129, 30, 105]])}
    {L(PO, "M68 109l51-50 50 73 53-51 52 50")}
  </>,
  <>
    {C(PO, 21.500, [[135, 72], [84, 132], [51, 204], [153, 156], [255, 90]])}
    <path d={plus(210, 48, 27) + plus(189, 111, 27) + plus(279, 147, 27) + plus(216, 183, 27) + plus(108, 192, 27)} stroke={PG} strokeWidth="6" />
  </>,
  <>{R(PG, [[36, 210, 24, 18], [66, 180, 24, 48], [96, 126, 24, 102], [126, 66, 24, 162], [156, 42, 24, 186], [186, 66, 24, 162], [216, 126, 24, 102], [246, 180, 24, 48], [276, 210, 24, 18]])}</>,
  <>
    {R(LG, [[39, 105, 42, 24], [114, 78, 42, 51], [189, 99, 42, 48], [264, 66, 42, 69]])}
    {R(G, [[39, 129, 42, 51], [114, 129, 42, 30], [189, 147, 42, 45], [264, 135, 42, 30]])}
    <path d="M60 63v138M45 63h30M45 201h30M135 51v162M120 51h30M120 213h30M210 45v174M195 45h30M195 219h30M285 33v192M270 33h30M270 225h30" stroke="#333" strokeWidth="6" />
  </>,
  <>
    {R(PG, [[21, 24, 54, 48], [63, 99, 18, 48], [108, 99, 24, 48], [21, 174, 9, 48], [201, 174, 42, 48]])}
    {R(PO, [[120, 24, 24, 48], [219, 24, 12, 48], [270, 99, 48, 48], [114, 174, 12, 48]])}
    {R("#ffecd9", [[150, 24, 24, 48], [252, 24, 48, 48], [54, 174, 51, 48], [276, 174, 24, 48]])}
    {R("#e2f3e8", [[21, 99, 36, 48], [150, 99, 87, 48], [138, 174, 24, 48]])}
  </>,
  <>
    {R("#fbfdfc", [[33, 30, 285, 48], [33, 105, 285, 48], [33, 180, 285, 48]])}
    {R("#f8f8f8", [[33, 30, 237, 48], [33, 105, 174, 48], [33, 180, 150, 48]])}
    {R("#f3f3f3", [[33, 30, 186, 48], [33, 105, 120, 48], [33, 180, 102, 48]])}
    {R(PG, [[33, 42, 150, 24], [33, 117, 240, 24], [33, 192, 126, 24]])}
    {R("#c0c0c0", [[201, 30, 6, 48], [243, 105, 6, 48], [279, 180, 6, 48]])}
  </>,
  <>
    {D(LG, [[93, 164, 57], [214, 70, 19]])}
    {D(G, [[98, 80, 21], [157, 65, 31], [182, 196, 25]])}
    {D(LO, [[185, 129, 34], [274, 98, 41]])}
    {D(O, [[242, 161, 22]])}
  </>,
];

function ShowMe() {
  return (
    <div className="absolute left-[2144px] top-[64px] flex w-[408px] flex-col items-end drop-shadow-[4px_3px_2px_rgba(0,0,0,0.3)]">
      <div className="z-10 -mb-[2px] flex h-[74px] w-[214px] items-center border-2 border-b-0 border-[#dedede] bg-[#fafafa] pb-[10px]">
        <svg className="ml-[20px]" width="32" height="30" viewBox="0 0 32 30">
          <path d="M0 0h25v6H0z" fill="#866e96" /><path d="M0 8h32v6H0z" fill="#80a4cb" />
          <path d="M0 16h13v6H0z" fill="#f4a67c" /><path d="M0 24h19v6H0z" fill="#fa7080" />
        </svg>
        <T w={100} className="ml-[10px] text-[24px] text-black">Show Me</T>
      </div>
      <div className="h-[1113px] w-[408px] border-2 border-[#dedede] bg-[#fafafa] pl-[26px] pt-[28px]">
        <div className="grid w-[352px] grid-cols-3 gap-2">
          {thumbs.map((t, i) => (
            <div key={i} className={"relative h-[84px] w-[112px] overflow-hidden rounded-[2px] bg-white " + (i === 6 ? "ring-4 ring-inset ring-[#e06c36]" : "ring-2 ring-inset ring-[#dedede]")}>
              <svg width="112" height="84" viewBox="0 0 336 252">{t}</svg>
            </div>
          ))}
        </div>
        <div className="mt-[35px] flex pl-1 text-[23px] leading-[34px] text-black">
          <T w={40}>For </T><T w={173} className="font-bold">horizontal bars</T><T w={35}> try</T>
        </div>
        <div className="mt-[13px] flex h-10 items-center pl-1 text-[23px] text-black">
          <T w={108} className="mt-[5px]">0 or more</T>
          <span className="ml-[5px] flex h-10 w-[178px] items-center rounded-full bg-[#4996b2] pl-[21px] text-white"><T w={131}>Dimensions</T></span>
        </div>
        <div className="mt-4 flex h-10 items-center pl-1 text-[23px] text-black">
          <T w={108} className="mt-[6px]">1 or more</T>
          <span className="ml-[5px] flex h-10 w-[154px] items-center rounded-full bg-[#00b180] pl-[21px] text-white"><T w={109}>Measures</T></span>
        </div>
      </div>
    </div>
  );
}

/* ---------- bottom bars ---------- */
function SheetTabs() {
  const cell = "flex h-full items-center border-r-2 border-[#cacaca]";
  return (
    <div className="flex h-[62px] shrink-0 items-center border-b-2 border-t-2 border-[#c9c9c9] bg-linear-to-b from-[#e3e3e3] to-[#e7e7e7]">
      <div className={cell + " w-[262px]"}>
        <Ico c="ml-[20px]" w={17} h={23} sw={1.800}>
          <ellipse cx="8.500" cy="5" rx="7.300" ry="4" /><path d="M1.200 5v13q1 4 7.300 4t7.300-4V5" />
        </Ico>
        <T w={134} className="ml-[11px] text-[24px] text-[#666]">Data Source</T>
      </div>
      <div className={cell + " w-[116px] bg-[#fafafa] pl-3"}><T w={88} className="text-[24px] font-bold text-[#555]">Sheet 1</T></div>
      <div className={cell + " w-[63px] pl-[18px] pt-1"}>
        <Ico w={30} h={30}><path d="M22 14V1H1v20h13M6.500 16v-4M11 16V7M16 14v-3" /><path d="M15 22.500h14M22 15.500v14" strokeWidth={4} /></Ico>
      </div>
      <div className={cell + " w-[64px] pl-[19px] pt-1"}>
        <Ico w={30} h={30}><path d="M22 13V1H1v20h11V1M1 11h21" /><path d="M15 22.500h14M22 15.500v14" strokeWidth={4} /></Ico>
      </div>
      <div className={cell + " w-[64px] pl-[19px] pt-1"}>
        <Ico w={30} h={30}><path d="M22 13V1q-5 4-10.500 4Q6 5 1 1v18q5 1 10.500 4V5" /><path d="M15 22.500h14M22 15.500v14" strokeWidth={4} /></Ico>
      </div>
    </div>
  );
}

function StatusBar() {
  const sep = "h-full border-l-2 border-[#bdbdbd] ";
  return (
    <div className="flex h-10 shrink-0 items-center bg-linear-to-b from-[#e8e8e8] to-[#cfcfcf] text-[20px] text-black">
      <T w={100} className="ml-[24px]">499 marks</T>
      <T w={204} className="ml-[32px]">499 rows by 1 column</T>
      <T w={189} className="ml-[31px]">SUM(Satisfied): 263</T>
      <div className={sep + "ml-auto w-[254px]"} />
      <div className={sep + "w-[54px]"} />
      <div className={sep + "w-[54px]"} />
      <div className={sep + "w-[94px]"} />
      <div className={sep + "flex w-[142px] items-center"}>
        <svg className="ml-[16px]" width="108" height="15" viewBox="0 0 108 15" fill="#a9a9a9">
          <path d="M0 0h2v15H0zM12 0v15L4 7.500zM42 0v15l-8-7.500zM66 0v15l8-7.500zM96 0v15l8-7.500zM106 0h2v15h-2z" />
        </svg>
      </div>
      <div className={sep + "flex w-[154px] items-center"}>
        <svg className="ml-[17px]" width="106" height="22" viewBox="0 0 106 22" fill="#a9a9a9">
          <path d="M0 0h6v6H0zM8 0h6v6H8zM16 0h6v6h-6zM0 8h6v6H0zM8 8h6v6H8zM16 8h6v6h-6zM0 16h6v6H0zM8 16h6v6H8zM16 16h6v6h-6zM42 0h22v14H42zM42 16h6v6h-6zM50 16h6v6h-6zM58 16h6v6h-6z" />
          <rect x="84" width="22" height="22" fill="#5e5e5e" />
        </svg>
      </div>
    </div>
  );
}

/* ---------- dock ---------- */
const Tile = ({ f, children }: { f: string; children?: ReactNode }) => (
  <svg width="46" height="46" viewBox="0 0 46 46" className="overflow-visible drop-shadow-[0_1px_1px_rgba(0,0,0,0.3)]">
    <defs>
      <linearGradient id="gBlue" x1="0" y1="0" x2="0" y2="1"><stop stopColor="#3478f0" /><stop offset="1" stopColor="#45c5fb" /></linearGradient>
      <linearGradient id="gStore" x1="0" y1="0" x2="0" y2="1"><stop stopColor="#35bdf5" /><stop offset="1" stopColor="#2a6de0" /></linearGradient>
      <linearGradient id="gGreen" x1="0" y1="0" x2="0" y2="1"><stop stopColor="#62ea70" /><stop offset="1" stopColor="#27c33f" /></linearGradient>
      <linearGradient id="gFind" x1="0" y1="0" x2="0" y2="1"><stop stopColor="#27c4fb" /><stop offset="1" stopColor="#2474ee" /></linearGradient>
      <linearGradient id="gPod" x1="0" y1="0" x2="0" y2="1"><stop stopColor="#c766f2" /><stop offset="1" stopColor="#7a2fb8" /></linearGradient>
      <linearGradient id="gMus" x1="0" y1="0" x2="0" y2="1"><stop stopColor="#fb5d73" /><stop offset="1" stopColor="#fa2c48" /></linearGradient>
      <linearGradient id="gBook" x1="0" y1="0" x2="0" y2="1"><stop stopColor="#fca127" /><stop offset="1" stopColor="#fb7a2a" /></linearGradient>
      <linearGradient id="gTv" x1="0" y1="0" x2="0" y2="1"><stop stopColor="#243632" /><stop offset="1" stopColor="#0c1112" /></linearGradient>
      <linearGradient id="gGrey" x1="0" y1="0" x2="0" y2="1"><stop stopColor="#d2dde0" /><stop offset="1" stopColor="#8e8e90" /></linearGradient>
      <clipPath id="tileClip"><rect width="46" height="46" rx="10.500" /></clipPath>
    </defs>
    <rect width="46" height="46" rx="10.500" fill={f} />
    {children}
  </svg>
);

const Slack = ({ k = 1 }: { k?: number }) => (
  <g transform={`scale(${k})`} strokeWidth="5" strokeLinecap="round" fill="none">
    <path d="M19.500 10v8M10.500 19h9" stroke="#36c5f0" /><path d="M27 10v9M35 19h-1" stroke="#2eb67d" />
    <path d="M27 27h9M27 35v1" stroke="#ecb22e" /><path d="M19.500 27v9M10.500 27h1" stroke="#e01e5a" />
  </g>
);
const Sheet = ({ k = 1 }: { k?: number }) => (
  <g transform={`scale(${k})`}>
    <rect width="46" height="46" rx="10.500" fill="#fbfbfb" />
    <path d="M1 11h44M1 17h44M1 23h44M1 29h44M1 35h44" stroke="#c4c4c8" strokeWidth="1" />
    <path d="M9 1v44" stroke="#eab0b0" strokeWidth="1" />
    <path d="M43 -6L25 34l-7 15 3-14L38-2z" fill="#93a9b8" stroke="#5d6c78" strokeWidth=".8" />
  </g>
);
const Compass = ({ k = 1 }: { k?: number }) => (
  <g transform={`scale(${k})`}>
    <circle cx="23" cy="23" r="20" fill="#2a8cf0" />
    <circle cx="23" cy="23" r="18" fill="none" stroke="#a9d4fb" strokeWidth="1.500" strokeDasharray=".8 1.500" />
    <path d="M37 10L26 26l-6-6z" fill="#f0443a" /><path d="M9 36l11-16 6 6z" fill="#f4f4f4" />
  </g>
);

const apps: [ReactNode, boolean][] = [
  [<Tile f="url(#gFind)"><g clipPath="url(#tileClip)"><path d="M26 0Q20 12 20.500 26h6.500q-1 10 2 20h17V0z" fill="#e3ebf5" /><path d="M13 13v5M34 13v5" stroke="#1a2430" strokeWidth="2" strokeLinecap="round" /><path d="M10 32q13 9 27-1" stroke="#1a2430" strokeWidth="1.800" fill="none" strokeLinecap="round" /></g></Tile>, true],
  [<Tile f="#edd5d8">{["#4be04b", "#fdbb22", "#fb8a22", "#e0262e", "#9a9a9a", "#fb3c64", "#9c45dd", "#2b94f5", "#2bc7a0"].map((c, i) => <rect key={c} x={7.5 + (i % 3) * 11.300} y={8 + Math.floor(i / 3) * 11} width="8.500" height="8.500" rx="2" fill={c} />)}</Tile>, false],
  [<Tile f="#f2f2f2"><Compass /></Tile>, true],
  [<Tile f="url(#gBlue)"><rect x="7" y="13" width="32" height="21" rx="2" fill="#f0f0f0" /><path d="M8 14l15 13 15-13M8 33l11-10M38 33L27 23" stroke="#9a9a9a" strokeWidth="1.200" fill="none" /></Tile>, false],
  [<Tile f="#a67c45"><rect x="44" y="10" width="4" height="8" fill="#c9d0d4" /><rect x="44" y="18" width="4" height="8" fill="#35a9df" /><rect x="44" y="26" width="4" height="6" fill="#f28f20" /><rect x="44" y="32" width="4" height="8" fill="#4cbb58" /><circle cx="24" cy="23" r="14" fill="#9f743e" stroke="#805c30" strokeWidth="1.200" /><circle cx="24" cy="18.500" r="4.500" fill="#8b6734" /><path d="M15 31q1-6 9-6t9 6q-4 5-9 5t-9-5z" fill="#8b6734" /></Tile>, false],
  [<Tile f="#fafafa"><path d="M0 14V10.500A10.500 10.500 0 0 1 10.500 0h25A10.500 10.500 0 0 1 46 10.500V14z" fill="#ef4d47" /><text x="23" y="11" fontSize="9.500" fontWeight="700" fill="#fff" textAnchor="middle" fontFamily="Inter">MAR</text><text x="23" y="39" fontSize="27" fill="#222" textAnchor="middle" fontFamily="Inter">8</text></Tile>, false],
  [<Tile f="#f2f0ec"><path d="M0 12V10.500A10.500 10.500 0 0 1 10.500 0h25A10.500 10.500 0 0 1 46 10.500V12z" fill="#fbcb35" /><path d="M1 23h44M1 34h44" stroke="#d5d3ce" strokeWidth="1.200" /></Tile>, true],
  [<Tile f="#f3efe6"><g clipPath="url(#tileClip)"><path d="M0 8L46 46H26L0 22z" fill="#fbd04a" /><path d="M26 0q1 18 20 22V0z" fill="#8fdc75" /><path d="M32 0q2 12 14 14V0z" fill="#f5f2ea" /><path d="M16 46V30l12 16z" fill="#b8e2a4" /><path d="M0 24l8 22H0z" fill="#f7a9bd" /><path d="M12 0v26" stroke="#3b82f0" strokeWidth="6" /><circle cx="12" cy="27" r="6.500" fill="#2f7cf2" stroke="#fff" strokeWidth="2.500" /><circle cx="35" cy="36" r="8" fill="#3a72cf" /><path d="M28 31q7-3 14 0" stroke="#e5484d" strokeWidth="2.500" fill="none" /></g><text x="35" y="40" fontSize="7.500" fontWeight="700" fill="#fff" textAnchor="middle" fontFamily="Inter">280</text></Tile>, false],
  [<Tile f="#fff">{["#fb9a26", "#e8d32c", "#8dc63c", "#45b59a", "#4b9bdc", "#7d74cc", "#c46fb0", "#f0563c"].map((c, i) => <ellipse key={c} cx="23" cy="12" rx="6" ry="9" fill={c} fillOpacity=".82" transform={`rotate(${i * 45} 23 23)`} />)}</Tile>, false],
  [<Tile f="url(#gGreen)"><path d="M23 9c10 0 17 6 17 13.500S33 36 23 36q-3 0-5-.7-2 2.500-6 3 2-2 1.500-5Q6 29 6 22.500C6 15 13 9 23 9z" fill="#f4fbf4" /><circle cx="41" cy="5" r="11.500" fill="#f4453f" /><text x="41" y="8.800" fontSize="10.500" fill="#fff" textAnchor="middle" fontFamily="Inter">122</text></Tile>, true],
  [<Tile f="url(#gGreen)"><rect x="7" y="13" width="22" height="20" rx="5" fill="#f1faf1" /><path d="M31 21l8-6v17l-8-6z" fill="#e3f3e3" /></Tile>, false],
  [<Tile f="#d52822"><path d="M5 13l12-4 2 27-8 2z" fill="#fff" /><rect x="14" y="9" width="24" height="29" fill="#fff" /><circle cx="27" cy="19" r="6" fill="#d52822" /><path d="M17 36q1-9 10-9t10 9z" fill="#d52822" /><circle cx="36" cy="36" r="12.500" fill="#3b3b3d" /><circle cx="36" cy="36" r="7" fill="#222" /><circle cx="36" cy="36" r="4" fill="#4a4270" /></Tile>, false],
  [<Tile f="url(#gMus)"><path d="M17 33V13l16-4v20" stroke="#fff" strokeWidth="2.800" fill="none" /><path d="M17 13l16-4v5l-16 4z" fill="#fff" /><ellipse cx="13.500" cy="33" rx="4.800" ry="4" fill="#fff" /><ellipse cx="29.500" cy="29.500" rx="4.800" ry="4" fill="#fff" /></Tile>, false],
  [<Tile f="url(#gPod)"><g fill="none" stroke="#fff" strokeWidth="2.800" strokeLinecap="round"><path d="M14 35a16 16 0 1 1 18 0" /><path d="M16.500 28a9 9 0 1 1 13 0" /></g><circle cx="23" cy="20.500" r="4" fill="#fff" /><path d="M18.500 28q0-2.500 4.500-2.500t4.500 2.500l-1.500 10q-.5 2-3 2t-3-2z" fill="#fff" /></Tile>, false],
  [<Tile f="url(#gTv)"><FaApple x="5" y="14" size={16} color="#fff" /><text x="21" y="30" fontSize="19" fill="#fff" fontFamily="Inter" fontWeight="500">tv</text></Tile>, false],
  [<Tile f="#fff"><path d="M10 10h9l17 20v6h-9L10 16z" fill="#f93b58" /><path d="M10 22l12 14H10zM24 10h12v14z" fill="#fa5a70" /></Tile>, false],
  [<Tile f="url(#gBook)"><path d="M22 14q-7-5-15 0v20q8-3 15 1zM24 14q7-5 15 0v20q-8-3-15 1z" fill="#fff8ee" /></Tile>, false],
  [<Tile f="url(#gStore)"><path d="M25.500 10L14 31M20.500 10L34 34M8 28h16M31 28h7M12 33.500l-1.500 2.500" stroke="#fff" strokeWidth="3.600" strokeLinecap="round" fill="none" /></Tile>, false],
  [<Tile f="url(#gGrey)"><circle cx="23" cy="23" r="19" fill="#57585a" stroke="#2f3032" strokeWidth="2" strokeDasharray="2 1" /><circle cx="23" cy="23" r="13.500" fill="#77797b" stroke="#222" strokeWidth="2.500" /><circle cx="23" cy="23" r="4" fill="#999" stroke="#222" strokeWidth="1.500" /><path d="M27 23h10M21 20l-5-9M21 26l-5 9" stroke="#222" strokeWidth="2.500" /></Tile>, false],
  [<Tile f="#b21a10"><path d="M10 35.500c-2-3.500 7-7.500 14.500-9s13-.5 12 2.200-7.500 0-11.500-4.700-5.500-12-2.500-12.500 2.500 5.500-1.500 13.500-9 13-11 10.500z" fill="none" stroke="#fff" strokeWidth="2.400" /></Tile>, true],
];

const apps2: ReactNode[] = [
  <Tile f="#fff"><Sheet /></Tile>,
  <Tile f="#fff"><rect x="12" y="8" width="27" height="30" rx="2" fill="#41a5ee" /><path d="M12 15.500h27V23H12z" fill="#2b7cd3" /><path d="M12 23h27v7.500H12z" fill="#185abd" /><path d="M12 30.500h27V36q0 2-2 2H14q-2 0-2-2z" fill="#103f91" /><rect x="4" y="14" width="18" height="18" rx="1.500" fill="#185abd" /><text x="13" y="28" fontSize="14" fontWeight="700" fill="#fff" textAnchor="middle" fontFamily="Inter">W</text></Tile>,
  <Tile f="#fff"><rect x="12" y="8" width="27" height="30" rx="2" fill="#21a366" /><path d="M26 8h11q2 0 2 2v5.500H26z" fill="#33c481" /><path d="M12 23h27v7.500H12z" fill="#107c41" /><path d="M12 30.500h27V36q0 2-2 2H14q-2 0-2-2z" fill="#185c37" /><rect x="4" y="14" width="18" height="18" rx="1.500" fill="#107c41" /><text x="13" y="28" fontSize="14" fontWeight="700" fill="#fff" textAnchor="middle" fontFamily="Inter">X</text></Tile>,
  <Tile f="#f5f5f5"><rect x="3" y="3" width="40" height="24" rx="7" fill="#8db4e8" /><rect x="3" y="24" width="40" height="10" fill="#2d4d80" /><path d="M3 33h40v4q0 6-6 6H9q-6 0-6-6z" fill="#d8dde0" /><path d="M26 28h18l3 16q-1 4-12 4t-12-4z" fill="#c8ccd0" stroke="#777" strokeWidth="1" /><rect x="25" y="23" width="20" height="9" rx="3" fill="#2b2b2b" /></Tile>,
  <Tile f="#fff"><Slack /></Tile>,
  <Tile f="#dfe2e2"><rect x="2" y="2" width="42" height="42" rx="8" fill="#1d1d1f" /><path d="M8 9l4 3.500-4 3.500M14 17h7" stroke="#fff" strokeWidth="1.800" fill="none" /></Tile>,
  <Tile f="#6f3a9f"><FaGithub x="3" y="3" size={40} color="#fff" /></Tile>,
  <svg width="48" height="48" viewBox="0 0 48 48" strokeWidth="2.400"><rect width="48" height="48" fill="#f7f7f7" stroke="#ddd" strokeWidth="1" /><path d={plus(24, 24, 8)} stroke="#2f6f9f" /><path d={plus(14, 14, 6) + plus(34, 14, 6) + plus(14, 34, 6) + plus(34, 34, 6)} stroke="#3279a8" /><path d={plus(24, 7, 4) + plus(24, 41, 4) + plus(7, 24, 4) + plus(41, 24, 4)} stroke="#4d93bb" strokeWidth="1.800" /></svg>,
];

const MiniSheet = () => <g transform="translate(35 34)"><Sheet k={0.4} /></g>;
const Mini = ({ children }: { children: ReactNode }) => (
  <svg width="54" height="54" viewBox="0 0 54 54" className="overflow-visible">{children}</svg>
);
const textLines = (x: number, y: number, w: number, n: number, c: string) =>
  <path d={Array.from({ length: n }, (_, i) => `M${x} ${y + i * 2.5}h${w - (i % 3)}`).join("")} stroke={c} strokeWidth="1.300" strokeDasharray="3 .7" />;

const minis: ReactNode[] = [
  <Mini><path d="M8 2h24l14 14v36H8z" fill="#fafafa" /><path d="M32 2v14h14z" fill="#c9c9c9" /><rect x="17" y="17" width="21" height="20" rx="4" fill="#5a8fdc" /><rect x="17" y="28" width="21" height="9" fill="#2c4470" /><rect x="27" y="26" width="11" height="13" fill="#555" /><text x="27" y="48" fontSize="8" fill="#555" textAnchor="middle" fontFamily="Inter">HEIC</text></Mini>,
  <Mini><path d="M10 0h22l13 17v36H10z" fill="#f4f4f2" /><path d="M32 0v17h13z" fill="#c9c9c9" />{textLines(14, 8, 12, 13, "#999")}{textLines(29, 20, 13, 8, "#999")}<text x="28" y="49" fontSize="8" fill="#555" textAnchor="middle" fontFamily="Inter">CSV</text></Mini>,
  <Mini><rect y="5" width="54" height="43" fill="#f8f8f8" /><path d="M3 8h46" stroke="#bbb" /><path d="M2 14h12" stroke="#b77fc8" />{textLines(2, 18, 48, 11, "#9fb4c0")}<MiniSheet /></Mini>,
  <Mini><MiniSheet /></Mini>,
  <Mini><MiniSheet /></Mini>,
  <Mini><rect y="12" width="54" height="30" fill="#b4b4b0" /><path d="M0 13h54" stroke="#e4e4e4" strokeWidth="2" />{textLines(1, 17, 52, 10, "#a2a2a0")}<MiniSheet /></Mini>,
  <Mini><rect y="3" width="53" height="48" fill="#fbfbfb" /><rect y="3" width="25" height="48" fill="#dfdde0" /><rect y="10" width="25" height="6" fill="#2f7df6" />{textLines(6, 20, 16, 12, "#aaa")}<rect x="36" y="12" width="15" height="9" rx="2" fill="#2b8df7" /><rect x="28" y="26" width="14" height="7" rx="1" fill="#b5b5b8" /><rect x="35" y="35" width="18" height="17" rx="4" fill="#35ce4c" /><circle cx="44" cy="43" r="6" fill="#eafaec" /></Mini>,
  <Mini><rect y="12" width="53" height="30" fill="#f6f6f4" /><rect y="12" width="53" height="2" fill="#23804a" />{textLines(2, 19, 31, 9, "#aaa")}<rect x="35" y="36" width="17" height="16" rx="4" fill="#fff" /><rect x="37" y="39" width="13" height="10" fill="#1d8a50" /><path d="M39 41l5 6M44 41l-5 6" stroke="#fff" strokeWidth="1.500" /></Mini>,
  <Mini><rect y="8" width="53" height="38" fill="#fafafa" /><rect y="8" width="53" height="4" fill="#3b1040" /><rect y="8" width="12" height="38" fill="#421445" /><rect y="22" width="12" height="2" fill="#2f7dc0" />{textLines(15, 15, 18, 11, "#bbb")}<rect x="37" y="13" width="15" height="14" fill="#b9a3a3" /><g transform="translate(35 35)"><rect width="17" height="17" rx="4" fill="#fff" /><Slack k={0.37} /></g></Mini>,
  <Mini><rect y="12" width="53" height="30" fill="#f6f9fa" /><rect y="15" width="53" height="5" fill="#15384c" /><path d="M20 26h22M20 30h16M14 36h8" stroke="#7ab9b5" strokeWidth="1.500" /><rect x="35" y="36" width="17" height="16" rx="4" fill="#eee" /><g transform="translate(35 35.500)"><Compass k={0.37} /></g></Mini>,
  <Mini><rect x="-1" y="9" width="56" height="36" rx="2" fill="#222" /><rect x="2" y="12" width="50" height="30" fill="#f7f7f5" />{textLines(4, 14, 44, 11, "#9aa59a")}<rect x="7" y="45" width="48" height="12" rx="4" fill="#75504f" /><text x="31" y="54" fontSize="10.500" fill="#fff" textAnchor="middle" fontFamily="Inter">python...</text></Mini>,
  <Mini><path d="M9 5h38l-4 43q-1 5-15 5t-15-5z" fill="#e6e4e4" fillOpacity=".85" /><ellipse cx="28" cy="6" rx="19" ry="6" fill="#f3f3f3" stroke="#c9c9c9" /><path d="M13 7l6-6 5 5 5-6 6 7 6-4 2 4z" fill="#444" /><path d="M15 5l5-2 4 4M29 1l6 4 4-2" stroke="#fff" strokeWidth="2" fill="none" /><path d="M17 16l4 30M28 15v32M39 16l-4 30" stroke="#cfcccc" strokeWidth="1.500" /></Mini>,
];

function Slot({ on, children }: { on?: boolean; children: ReactNode }) {
  return (
    <div className="flex w-[60.2px] shrink-0 flex-col items-center">
      <div className="flex h-[70px] items-center justify-center pb-px">{children}</div>
      {on && <div className="-mt-[3px] h-[6px] w-[6px] rounded-full bg-[#4b0d18]" />}
    </div>
  );
}

function Dock() {
  return (
    <div className="ml-[43px] flex h-[78px] w-[2475px] rounded-[22px] border border-white/40 bg-[linear-gradient(90deg,#dd939b_0%,#c69788_10%,#b8938c_17%,#cf7f8c_25%,#e58d97_32%,#c98b83_41%,#c07585_48%,#e08298_56%,#d28494_63%,#d08d98_69%,#c28f9c_74%,#d58fa2_80%,#de7d96_86%,#e58f90_93%,#d07c78_100%)] pl-[3px]">
      {apps.map(([n, on], i) => <Slot key={i} on={on}>{n}</Slot>)}
      <div className="mx-[13px] mt-[10px] h-[58px] w-[2px] shrink-0 bg-[#5d1c2c]/50" />
      {apps2.map((n, i) => <Slot key={i} on>{n}</Slot>)}
      <div className="mx-[12px] mt-[10px] h-[58px] w-[2px] shrink-0 bg-[#5d1c2c]/50" />
      {minis.map((n, i) => <Slot key={i}>{n}</Slot>)}
    </div>
  );
}

export default function App() {
  return (
    <div className="flex h-[1600px] w-[2560px] flex-col overflow-hidden bg-[linear-gradient(180deg,transparent_0%,transparent_94%,rgba(190,90,115,0.55)_100%),linear-gradient(100deg,#b4606e_0%,#8a5563_8%,#6b4a4a_18%,#7a4556_28%,#6a3a50_38%,#5a2a48_50%,#744a50_62%,#6b5058_70%,#7a4a5c_82%,#7a3050_92%,#6b4030_100%)] font-['Inter']">
      <MenuBar />
      <div className="relative mt-[2px] flex h-[1452px] shrink-0 flex-col overflow-hidden rounded-[20px] bg-[#f5f5f5]">
        <div className="flex h-14 shrink-0 items-center bg-[#f7f3f2]">
          <span className="ml-4 h-6 w-6 rounded-full border border-[#e0443e] bg-[#ff5f57]" />
          <span className="ml-4 h-6 w-6 rounded-full border border-[#dea123] bg-[#febc3d]" />
          <span className="ml-4 h-6 w-6 rounded-full border border-[#1aab29] bg-[#34c84a]" />
          <T w={290} className="ml-[1014px] text-[25px] font-bold text-[#4a4a4a]">Tableau Public - Book1</T>
        </div>
        <Toolbar />
        <div className="flex h-[1214px] shrink-0 overflow-hidden border-t-2 border-[#d0d0d0]">
          <DataPane />
          <Cards />
          <Worksheet />
        </div>
        <SheetTabs />
        <StatusBar />
        <ShowMe />
      </div>
      <div className="h-[10px] shrink-0" />
      <Dock />
    </div>
  );
}
